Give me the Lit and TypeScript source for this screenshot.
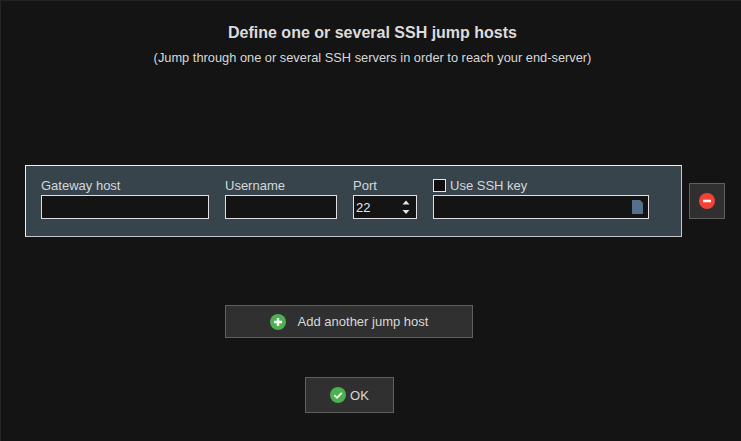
import { LitElement, html, css } from "lit";
import { customElement } from "lit/decorators.js";

@customElement("app-root")
export class AppRoot extends LitElement {
  static styles = css`
    :host {
      display: block;
      width: 741px;
      height: 441px;
      overflow: hidden;
      font-family: "Liberation Sans", Arial, sans-serif;
      font-size: 13px;
      color: #d8d8d8;
    }
    .page {
      box-sizing: border-box;
      width: 741px;
      height: 441px;
      background: #141414;
      border-left: 1px solid #262626;
      border-top: 1px solid #222;
      display: flex;
      flex-direction: column;
      padding-top: 23px;
    }
    .title {
      margin-left: 3px;
      text-align: center;
      font-weight: bold;
      font-size: 16px;
      line-height: 18px;
      color: #dcdcdc;
    }
    .sub {
      margin-left: 3px;
      margin-top: 9px;
      text-align: center;
      font-size: 12.83px;
      line-height: 14px;
      color: #d8d8d8;
    }
    .row {
      display: flex;
      align-items: center;
      gap: 7px;
      margin-top: 100px;
      padding-left: 24px;
    }
    .panel {
      box-sizing: border-box;
      width: 657px;
      height: 72px;
      background: #37444c;
      border: 1px solid;
      border-color: #f0f0f0 #c4c8ca #c4c8ca #f0f0f0;
      padding: 11px 15px 0;
      display: flex;
      gap: 16px;
    }
    .field {
      display: flex;
      flex-direction: column;
    }
    .label {
      box-sizing: border-box;
      height: 18px;
      line-height: 15px;
      padding-bottom: 2px;
      display: flex;
      align-items: center;
      gap: 4px;
      color: #d4d8da;
    }
    .check {
      box-sizing: border-box;
      width: 13px;
      height: 13px;
      background: #0e0e0e;
      border: 1px solid #e6e6e6;
    }
    .input {
      box-sizing: border-box;
      height: 24px;
      background: #141414;
      border: 1px solid #e0e0e0;
      display: flex;
      align-items: center;
      justify-content: space-between;
      padding: 0 5px 0 2px;
      color: #e6e6e6;
      font-size: 13px;
    }
    .spin {
      display: block;
      margin-right: 1px;
    }
    .doc {
      display: block;
    }
    .w1 { width: 168px; }
    .w2 { width: 112px; }
    .w3 { width: 64px; }
    .w4 { width: 216px; }
    .btn {
      box-sizing: border-box;
      background: #303030;
      border: 1px solid #606060;
      display: flex;
      align-items: center;
      justify-content: center;
      color: #d8d8d8;
      font-size: 13px;
    }
    .remove {
      width: 36px;
      height: 36px;
    }
    .add {
      width: 248px;
      height: 33px;
      margin: 68px 0 0 224px;
      gap: 12px;
    }
    .ok {
      width: 89px;
      height: 36px;
      margin: 39px 0 0 304px;
      gap: 4px;
    }
    svg { flex: none; }
  `;

  render() {
    return html`
      <div class="page">
        <div class="title">Define one or several SSH jump hosts</div>
        <div class="sub">(Jump through one or several SSH servers in order to reach your end-server)</div>
        <div class="row">
          <div class="panel">
            <div class="field"><div class="label">Gateway host</div><div class="input w1"></div></div>
            <div class="field"><div class="label">Username</div><div class="input w2"></div></div>
            <div class="field">
              <div class="label">Port</div>
              <div class="input w3">
                <span>22</span>
                <svg class="spin" width="8" height="16" viewBox="0 0 8 16">
                  <path d="M0.5 5.5 L4 1.5 L7.5 5.5 Z M0.5 11 L7.5 11 L4 15 Z" fill="#e4e4e4" />
                </svg>
              </div>
            </div>
            <div class="field">
              <div class="label"><span class="check"></span>Use SSH key</div>
              <div class="input w4">
                <span></span>
                <svg class="doc" width="11" height="14" viewBox="0 0 11 14">
                  <path d="M0 0 H8 L11 3 V14 H0 Z" fill="#54708a" />
                </svg>
              </div>
            </div>
          </div>
          <div class="btn remove">
            <svg width="16" height="16" viewBox="0 0 16 16">
              <circle cx="8" cy="8" r="8" fill="#f44336" />
              <rect x="4" y="6.75" width="8" height="2.5" fill="#fff" />
            </svg>
          </div>
        </div>
        <div class="btn add">
          <svg width="16" height="16" viewBox="0 0 16 16">
            <circle cx="8" cy="8" r="8" fill="#4caf50" />
            <path d="M6.8 4 H9.2 V6.8 H12 V9.2 H9.2 V12 H6.8 V9.2 H4 V6.8 H6.8 Z" fill="#fff" />
          </svg>
          <span>Add another jump host</span>
        </div>
        <div class="btn ok">
          <svg width="16" height="16" viewBox="0 0 16 16">
            <circle cx="8" cy="8" r="8" fill="#4caf50" />
            <path d="M4.3 8.2 L7 10.8 L11.8 5.8" fill="none" stroke="#fff" stroke-width="1.8" />
          </svg>
          <span>OK</span>
        </div>
      </div>
    `;
  }
}
